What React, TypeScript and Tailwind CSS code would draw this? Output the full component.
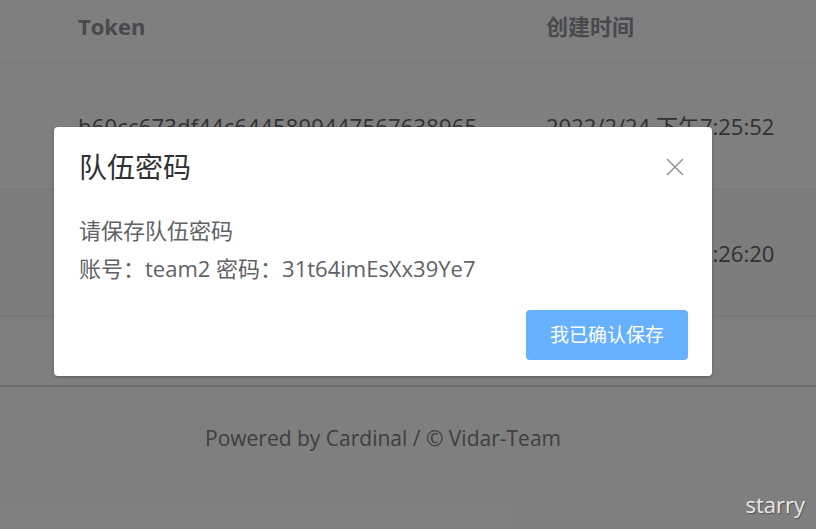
const rows = [
  { token: "b60cc673df44c6445899447567638965", time: "2022/2/24 下午7:25:52" },
  { token: "a3f1d0b98e2c4f7a9b6e5d4c3b2a1908", time: "2022/2/24 下午7:26:20" },
];

const font = { fontFamily: '"Open Sans", "Noto Sans CJK SC", sans-serif' };

export default function App() {
  return (
    <div className="relative h-[529px] w-[816px] overflow-hidden bg-white" style={font}>
      {/* page underneath */}
      <div className="flex flex-col">
        <div className="grid h-[63px] grid-cols-[546px_1fr] border-b border-[#ebeef5] pb-[10px] text-[22px] font-bold text-[#909399]">
          <div className="flex items-center pl-[78px]">Token</div>
          <div className="flex items-center">创建时间</div>
        </div>
        {rows.map((r, i) => (
          <div
            key={i}
            className={`grid h-[127px] grid-cols-[546px_1fr] items-center border-b border-[#ebeef5] text-[22px] text-[#606266] ${i === 1 ? "bg-[#fafafa]" : ""}`}
          >
            <div className="pl-[78px] tracking-[0.2px]">{r.token}</div>
            <div className="whitespace-nowrap">{r.time}</div>
          </div>
        ))}
        <div className="h-[70px] border-b-2 border-[#dcdfe6]" />
        <div className="flex h-[104px] items-center justify-center pr-[50px] text-[21px] text-[#808080]">
          Powered by Cardinal / © Vidar-Team
        </div>
      </div>

      {/* mask */}
      <div className="absolute inset-0 bg-black/50" />

      {/* dialog */}
      <div className="absolute left-[54px] top-[127px] flex h-[249px] w-[658px] flex-col rounded-[4px] bg-white shadow-[0_1px_3px_rgba(0,0,0,0.3)]">
        <div className="flex items-center justify-between pl-[25px] pr-[28px] pt-[22px]">
          <span className="text-[28px] leading-[36px] text-[#303133]">队伍密码</span>
          <svg width="18" height="18" viewBox="0 0 18 18" className="text-[#909399]">
            <path d="M1 1L17 17M17 1L1 17" stroke="currentColor" strokeWidth="1.5" fill="none" />
          </svg>
        </div>
        <div className="mt-[26px] pl-[25px] text-[22px] leading-[38px] text-[#606266]">
          <p>请保存队伍密码</p>
          <p>账号：team2 密码：31t64imEsXx39Ye7</p>
        </div>
        <div className="mt-auto flex justify-end pb-[16px] pr-[24px]">
          <button className="h-[50px] w-[162px] rounded-[4px] bg-[#66b1ff] text-[19px] text-white">
            我已确认保存
          </button>
        </div>
      </div>

      {/* watermark */}
      <div className="absolute bottom-[8px] right-[11px] text-[22px] text-[#e8e8e8] [text-shadow:1px_1px_1px_rgba(0,0,0,0.35)]">
        starry
      </div>
    </div>
  );
}
